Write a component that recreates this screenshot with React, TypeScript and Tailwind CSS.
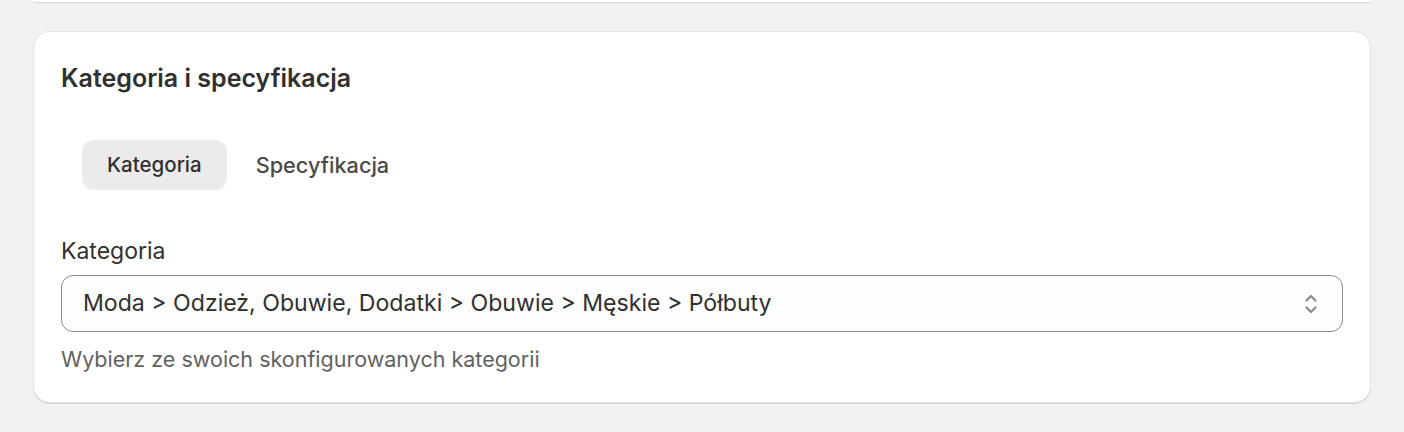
import React from "react";

export default function App() {
  return (
    <div
      className="w-[1404px] h-[432px] bg-[#f1f1f1] overflow-hidden"
      style={{ fontFamily: "Inter, 'Noto Sans', sans-serif" }}
    >
      <div className="mx-[33px] h-[2px] bg-white rounded-b-[16px] shadow-[0_1px_1px_rgba(0,0,0,0.12)]" />
      <div className="mx-[33px] mt-[29px] h-[372px] bg-white rounded-[17px] border border-[#e3e3e3] shadow-[0_1px_0_#d4d4d4] pl-[27px] pr-[27px] pt-[30px]">
        <h2 className="text-[25px] leading-[32px] font-semibold text-[#303030]">
          Kategoria i specyfikacja
        </h2>
        <div className="mt-[46px] ml-[21px] flex items-center gap-[4px]">
          <button className="h-[50px] px-[25px] rounded-[12px] bg-[#ebebeb] text-[20.5px] font-[550] text-[#303030]">
            Kategoria
          </button>
          <button className="h-[50px] px-[25px] rounded-[12px] text-[21.7px] font-medium text-[#4a4a4a]">
            Specyfikacja
          </button>
        </div>
        <div className="mt-[47px] text-[23px] leading-[28px] text-[#303030]">Kategoria</div>
        <div className="mt-[10px] h-[57px] rounded-[12px] border border-[#8a8a8a] bg-[#fdfdfd] flex items-center justify-between pl-[21px] pr-[24px]">
          <span className="text-[23.1px] text-[#303030]">
            Moda &gt; Odzież, Obuwie, Dodatki &gt; Obuwie &gt; Męskie &gt; Półbuty
          </span>
          <svg width="14" height="24" viewBox="0 0 14 24" fill="none">
            <path d="M2.5 8.5 L7 4 L11.5 8.5" stroke="#8a8a8a" strokeWidth="2.2" strokeLinecap="round" strokeLinejoin="round" />
            <path d="M2.5 15.5 L7 20 L11.5 15.5" stroke="#8a8a8a" strokeWidth="2.2" strokeLinecap="round" strokeLinejoin="round" />
          </svg>
        </div>
        <div className="mt-[13px] text-[21.5px] leading-[28px] text-[#616161]">
          Wybierz ze swoich skonfigurowanych kategorii
        </div>
      </div>
    </div>
  );
}
